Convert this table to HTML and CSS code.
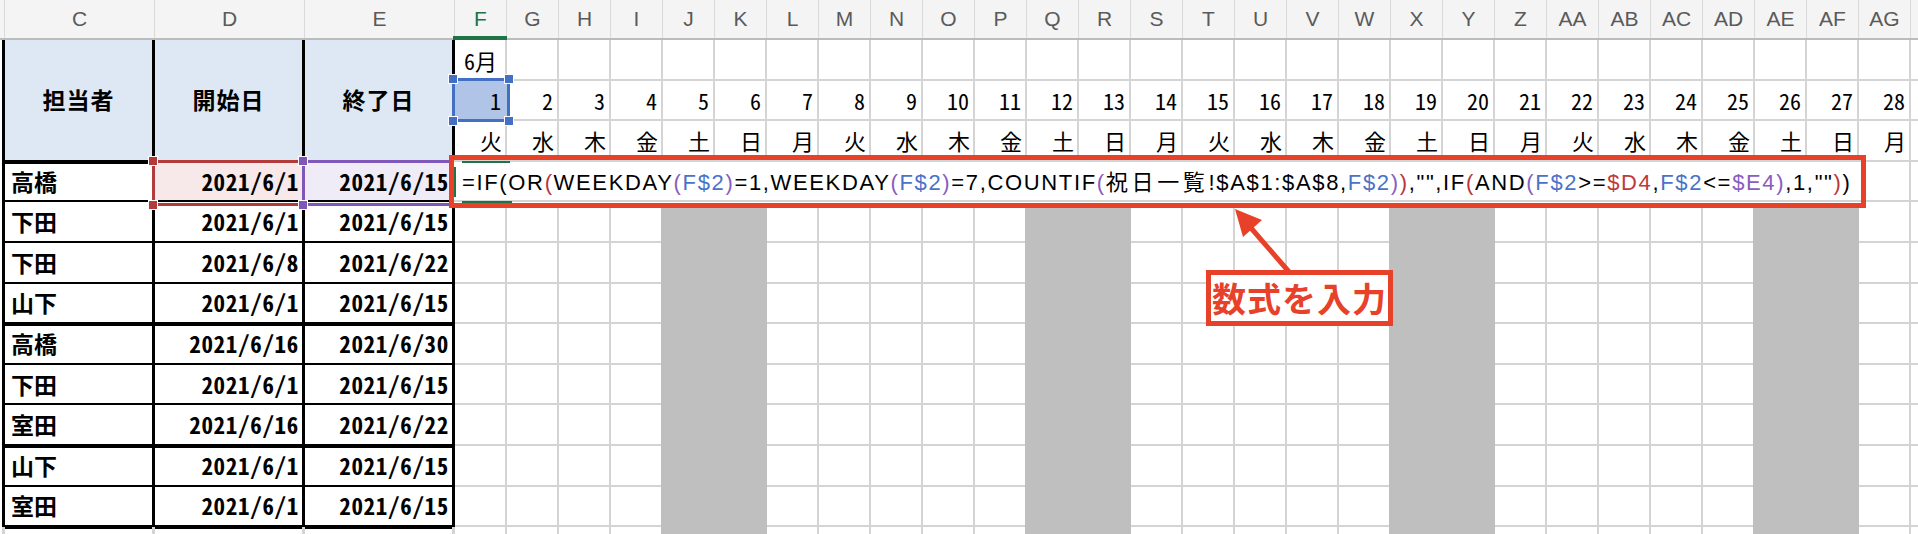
FILE: index.html
```html
<!DOCTYPE html>
<html lang="ja">
<head>
<meta charset="utf-8">
<title>ガントチャート</title>
<link rel="stylesheet" href="styles.css">
</head>
<body>
<div class="sheet">
  <div class="colhdr">
    <div class="s"></div>
    <div class="w3">C</div><div class="w3">D</div><div class="w3">E</div>
    <div class="sel">F</div><div>G</div><div>H</div><div>I</div><div>J</div><div>K</div><div>L</div>
    <div>M</div><div>N</div><div>O</div><div>P</div><div>Q</div><div>R</div><div>S</div>
    <div>T</div><div>U</div><div>V</div><div>W</div><div>X</div><div>Y</div><div>Z</div>
    <div>AA</div><div>AB</div><div>AC</div><div>AD</div><div>AE</div><div>AF</div><div>AG</div>
    <div class="fl"></div>
  </div>

  <div class="body">
    <div class="lt">
      <div class="h c1">担当者</div><div class="h">開始日</div><div class="h">終了日</div>

      <div class="n c1">高橋</div>
      <div class="t hr">2021/6/1<i class="fr red"><b class="hd tl"></b><b class="hd bl"></b></i></div>
      <div class="t hp">2021/6/15<i class="fr pur"><b class="hd tl"></b><b class="hd bl"></b></i></div>

      <div class="n c1">下田</div><div class="t">2021/6/1</div><div class="t">2021/6/15</div>
      <div class="n c1">下田</div><div class="t">2021/6/8</div><div class="t">2021/6/22</div>
      <div class="n c1 k">山下</div><div class="t k">2021/6/1</div><div class="t k">2021/6/15</div>
      <div class="n c1">高橋</div><div class="t">2021/6/16</div><div class="t">2021/6/30</div>
      <div class="n c1">下田</div><div class="t">2021/6/1</div><div class="t">2021/6/15</div>
      <div class="n c1 k">室田</div><div class="t k">2021/6/16</div><div class="t k">2021/6/22</div>
      <div class="n c1">山下</div><div class="t">2021/6/1</div><div class="t">2021/6/15</div>
      <div class="n c1 k">室田</div><div class="t k">2021/6/1</div><div class="t k">2021/6/15</div>

      <div class="tail c1"></div><div class="tail"></div><div class="tail"></div>
    </div>

    <div class="rg">
      <div class="mo">6月</div>

      <div class="d cur">1<i class="fr blu"><b class="hd tl"></b><b class="hd tr"></b><b class="hd bl"></b><b class="hd br"></b></i></div>
      <div class="d">2</div><div class="d">3</div><div class="d">4</div><div class="d">5</div><div class="d">6</div><div class="d">7</div>
      <div class="d">8</div><div class="d">9</div><div class="d">10</div><div class="d">11</div><div class="d">12</div><div class="d">13</div><div class="d">14</div>
      <div class="d">15</div><div class="d">16</div><div class="d">17</div><div class="d">18</div><div class="d">19</div><div class="d">20</div><div class="d">21</div>
      <div class="d">22</div><div class="d">23</div><div class="d">24</div><div class="d">25</div><div class="d">26</div><div class="d">27</div><div class="d">28</div>

      <div class="w">火</div><div class="w">水</div><div class="w">木</div><div class="w">金</div><div class="w">土</div><div class="w">日</div><div class="w">月</div>
      <div class="w">火</div><div class="w">水</div><div class="w">木</div><div class="w">金</div><div class="w">土</div><div class="w">日</div><div class="w">月</div>
      <div class="w">火</div><div class="w">水</div><div class="w">木</div><div class="w">金</div><div class="w">土</div><div class="w">日</div><div class="w">月</div>
      <div class="w">火</div><div class="w">水</div><div class="w">木</div><div class="w">金</div><div class="w">土</div><div class="w">日</div><div class="w">月</div>

      <div class="we we1"></div>
      <div class="we we2"></div>
      <div class="we we3"></div>
      <div class="we we4"></div>

      <div class="fx">
        <i class="ac ac-t"></i><i class="ac ac-l"></i><i class="ac ac-b"></i>
        <span class="ftxt">=IF(OR<span class="p1">(</span>WEEKDAY<span class="p2">(</span><span class="rb">F$2</span><span class="p2">)</span>=1,WEEKDAY<span class="p2">(</span><span class="rb">F$2</span><span class="p2">)</span>=7,COUNTIF<span class="p2">(</span><span class="cj">祝日一覧</span>!$A$1:$A$8,<span class="rb">F$2</span><span class="p2">)</span><span class="p1">)</span>,"",IF<span class="p1">(</span>AND<span class="p2">(</span><span class="rb">F$2</span>&gt;=<span class="rr">$D4</span>,<span class="rb">F$2</span>&lt;=<span class="rp">$E4</span><span class="p2">)</span>,1,""<span class="p1">)</span>)</span>
      </div>
    </div>
  </div>

  <svg class="arrow" width="80" height="80" viewBox="0 0 80 80">
    <line x1="65" y1="73" x2="26" y2="28" stroke="#e8412a" stroke-width="5"/>
    <polygon points="10,9 37,20 18,37" fill="#e8412a"/>
  </svg>
  <div class="callout">数式を入力</div>
</div>
</body>
</html>
```

FILE: styles.css
```css
* { box-sizing: border-box; }

body {
  margin: 0;
  width: 1918px;
  height: 534px;
  overflow: hidden;
  background: #fff;
  color: #000;
  font-family: "Noto Sans CJK JP", "Liberation Sans", sans-serif;
}

.sheet { position: relative; height: 534px; overflow: hidden; }

/* column header */
.colhdr {
  display: flex;
  height: 40px;
  background: #f4f4f4;
  border-bottom: 2px solid #bcbcbc;
  font-family: "Liberation Sans", Arial, sans-serif;
  font-size: 21px;
  color: #5a5a5a;
}
.colhdr div {
  flex: 0 0 52px;
  border-right: 1px solid #dadada;
  display: flex;
  align-items: center;
  justify-content: center;
}
.colhdr .s { flex-basis: 5px; }
.colhdr .w3 { flex-basis: 150px; }
.colhdr .fl { flex: 1 1 auto; border-right: none; }
.colhdr .sel { color: #217346; position: relative; }
.colhdr .sel::after {
  content: "";
  position: absolute;
  left: -2px;
  right: -1px;
  bottom: -2px;
  height: 4px;
  background: #217346;
}

.body { display: flex; }

/* left table */
.lt {
  flex: 0 0 453px;
  margin-left: 2px;
  display: grid;
  grid-template-columns: 153px 150px 150px;
  grid-template-rows: repeat(12, 40.6px) 6.8px;
  background: #fff;
}
.lt > div {
  border-right: 3px solid #000;
  border-bottom: 2px solid #000;
  display: flex;
  align-items: center;
  line-height: 1;
}
.lt > .c1 { border-left: 3px solid #000; }
.lt > .h {
  grid-row: 1 / 4;
  background: #dde8f4;
  justify-content: center;
  font-weight: 700;
  font-size: 23px;
  letter-spacing: 1px;
  box-shadow: 0 2px 0 #000;
}
.lt > .n {
  font-weight: 700;
  font-size: 23px;
  padding-left: 6px;
}
.lt > .t {
  justify-content: flex-end;
  font-weight: 700;
  font-size: 23px;
  letter-spacing: 0.7px;
  font-feature-settings: "hwid" 1;
  padding-right: 3px;
}
.lt > .k { box-shadow: 0 2px 0 #000; }
.lt > .tail {
  border-bottom: none;
  border-right: 3px solid #d4d4d4;
}
.lt > .tail.c1 { border-left: 3px solid #d4d4d4; }

.lt > .hr { position: relative; background: #f7e9e9; }
.lt > .hp { position: relative; background: #f0ecf7; }

/* reference frames and handles */
.fr {
  position: absolute;
  border: 3px solid;
  z-index: 1;
}
.fr.red { top: -2px; left: -3px; right: -3px; bottom: -6px; border-color: #b23b3b; }
.fr.pur { top: -2px; left: -3px; right: 0; bottom: -6px; border-color: #7e57b8; }
.fr.blu { top: -3px; left: -3px; right: -3px; bottom: -3px; border-color: #4470c4; }
.hd {
  position: absolute;
  width: 10px;
  height: 10px;
  border: 1px solid #fff;
}
.red .hd { background: #b23b3b; }
.pur .hd { background: #7e57b8; }
.blu .hd { background: #4470c4; }
.hd.tl { left: -7px; top: -7px; }
.hd.tr { right: -7px; top: -7px; }
.hd.bl { left: -7px; bottom: -7px; }
.hd.br { right: -7px; bottom: -7px; }

/* right grid */
.rg {
  flex: 1 1 auto;
  display: grid;
  grid-template-columns: repeat(28, 52px) 1fr;
  grid-template-rows: repeat(12, 40.6px) 6.8px;
  background-image:
    repeating-linear-gradient(90deg, transparent 0 50px, #d4d4d4 50px 52px),
    repeating-linear-gradient(180deg, transparent 0 38.6px, #d4d4d4 38.6px 40.6px);
  font-size: 22px;
  line-height: 1;
}
.mo {
  grid-row: 1;
  grid-column: 1;
  display: flex;
  align-items: center;
  padding: 0 0 0 9px;
  white-space: nowrap;
  font-feature-settings: "hwid" 1;
}
.d, .w {
  display: flex;
  align-items: center;
  justify-content: flex-end;
  padding: 0 6px 2px 0;
  font-feature-settings: "hwid" 1;
}
.d { grid-row: 2; }
.w { grid-row: 3; padding-right: 5px; }
.d.cur {
  position: relative;
  background: #b0c4e8;
  margin-bottom: 2px;
  padding-bottom: 0;
}

.we {
  grid-row: 5 / 14;
  background: #bfbfbf;
  margin-left: -2px;
}
.we1 { grid-column: 5 / 7; }
.we2 { grid-column: 12 / 14; }
.we3 { grid-column: 19 / 21; }
.we4 { grid-column: 26 / 28; }

/* formula editing box */
.fx {
  grid-row: 4;
  grid-column: 1 / 28;
  margin: -7px -7px -6px -6px;
  border: 5px solid #e8412a;
  position: relative;
  z-index: 2;
  background: linear-gradient(to bottom, #d4d4d4 0 2px, #fff 2px calc(100% - 3px), #d4d4d4 calc(100% - 3px) calc(100% - 1px), #fff calc(100% - 1px));
  display: flex;
  align-items: center;
  padding-left: 8px;
  white-space: nowrap;
}
.ftxt {
  font-family: "Liberation Sans", Arial, sans-serif;
  font-size: 22px;
  letter-spacing: 1.65px;
  color: #000;
  position: relative;
}
.ftxt .cj {
  font-family: "Noto Sans CJK JP", sans-serif;
  font-size: 22px;
  letter-spacing: 3.7px;
}
.p1 { color: #b8353d; }
.p2 { color: #8a5cc0; }
.rb { color: #4a72c8; }
.rr { color: #c0393b; }
.rp { color: #8a5cc0; }

.ac { position: absolute; background: #217346; }
.ac-t { left: 8px; top: 1px; width: 48px; height: 2px; }
.ac-l { left: 0; top: 7px; width: 2px; height: 30px; }
.ac-b { left: 8px; bottom: 0; width: 50px; height: 2px; }

/* annotation */
.arrow {
  position: absolute;
  left: 1225px;
  top: 200px;
  z-index: 3;
}
.callout {
  position: absolute;
  left: 1206px;
  top: 270px;
  width: 187px;
  height: 56px;
  border: 5px solid #e8412a;
  background: #fff;
  color: #e8412a;
  font-weight: 700;
  font-size: 34px;
  letter-spacing: 1px;
  line-height: 1;
  display: flex;
  align-items: center;
  justify-content: center;
  z-index: 3;
}
```
